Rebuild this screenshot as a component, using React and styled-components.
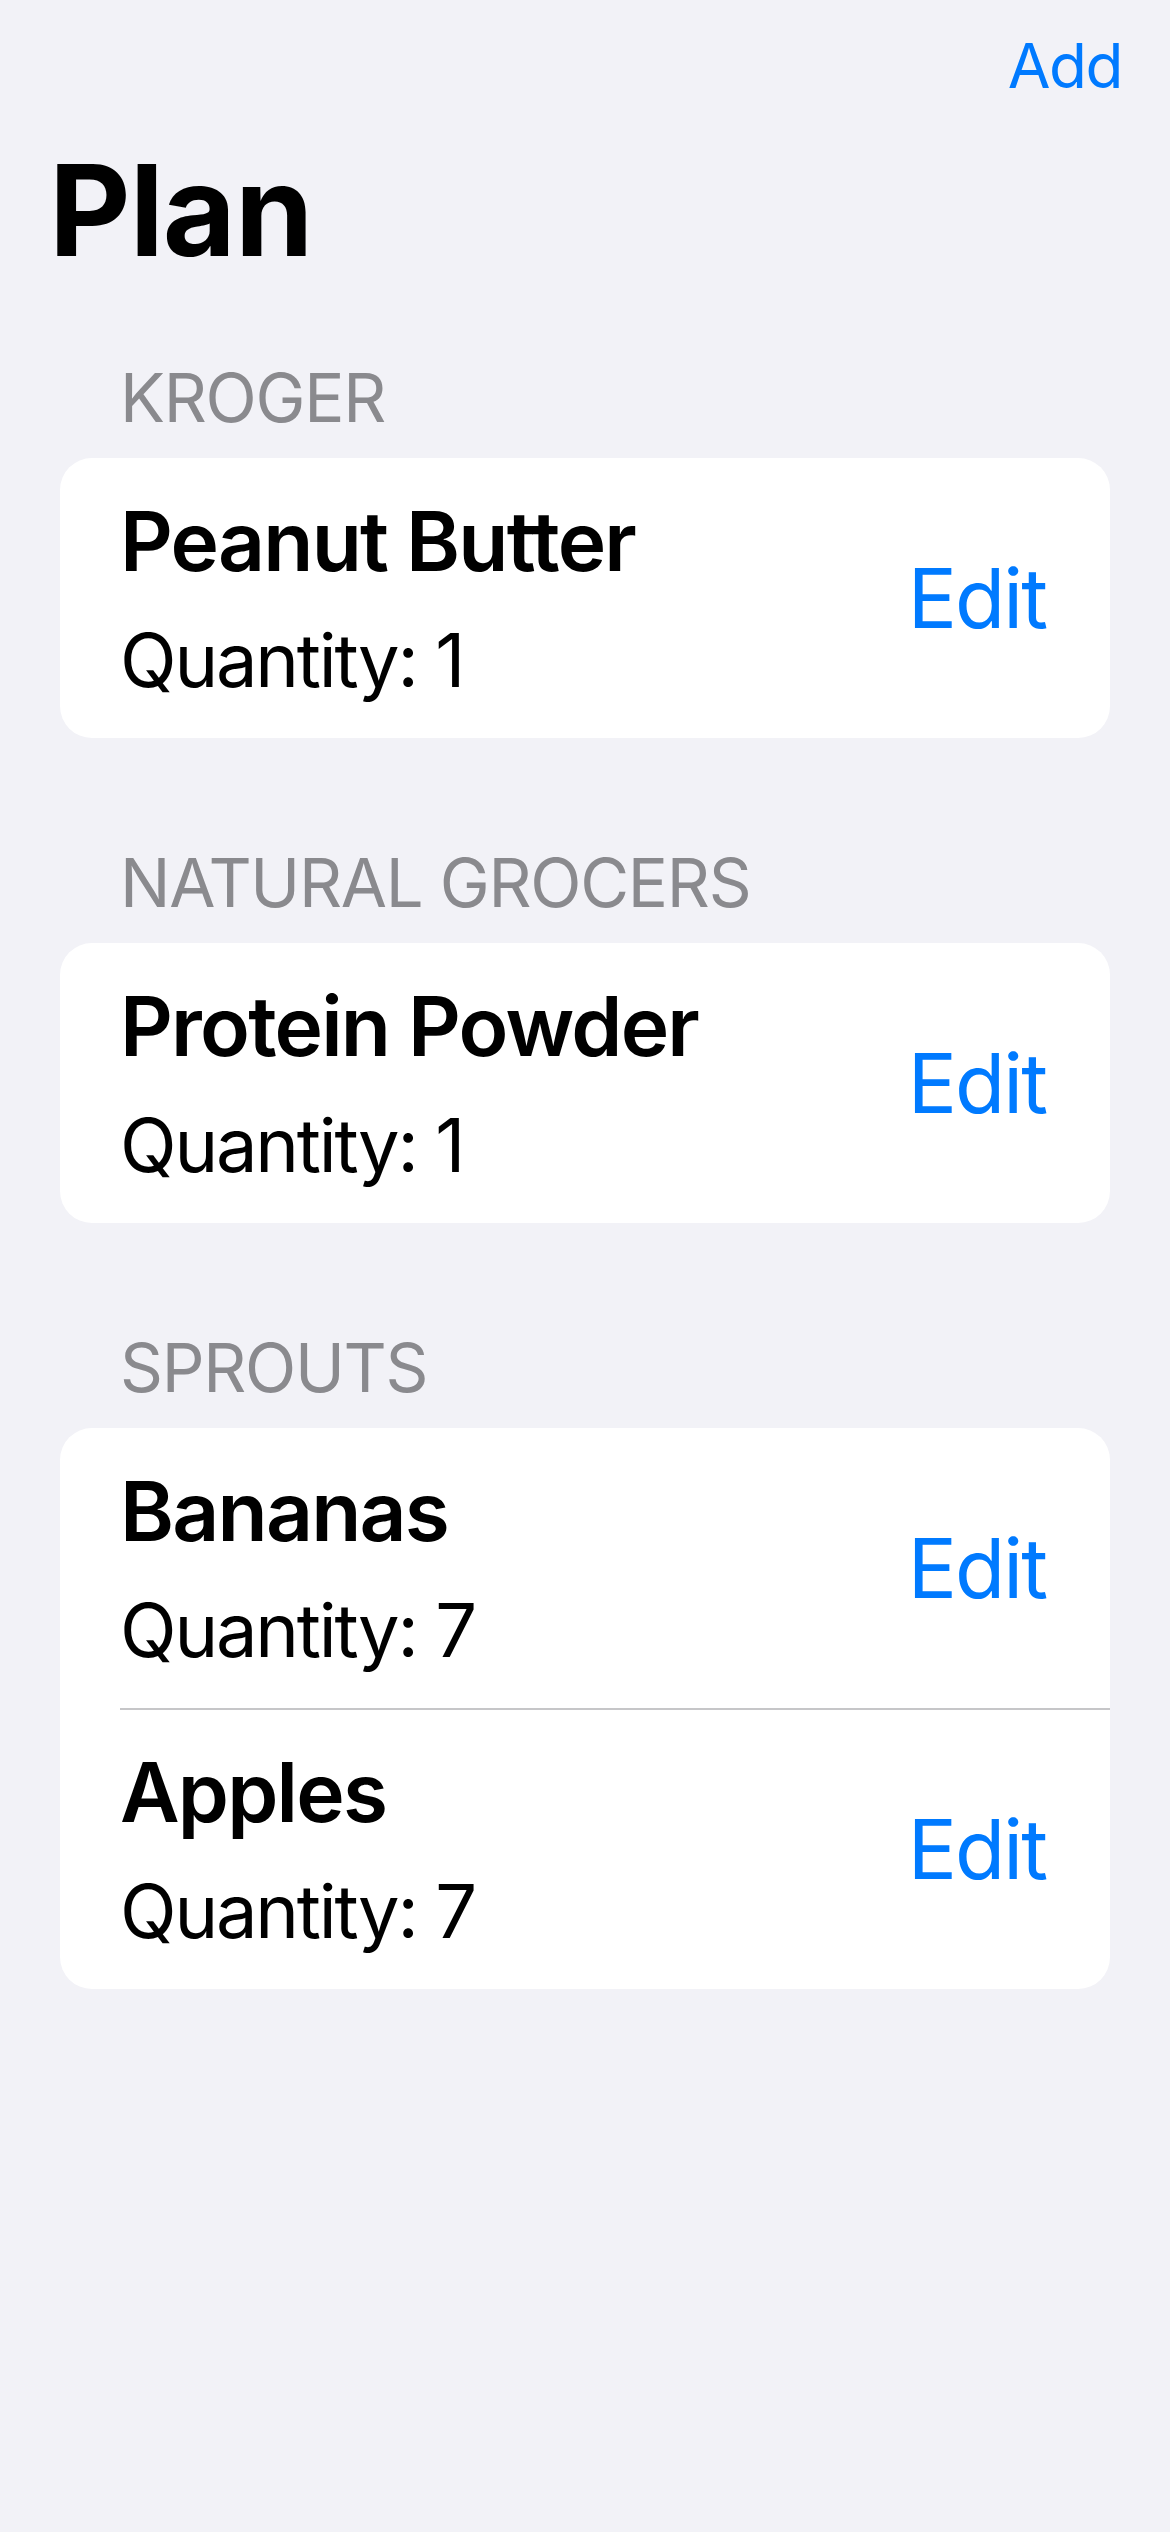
import React from 'react';
import styled, { createGlobalStyle } from 'styled-components';

const GlobalStyle = createGlobalStyle`
  html, body {
    margin: 0;
    padding: 0;
    background: #f2f2f7;
  }
  body {
    font-family: Inter, "Noto Sans", "Liberation Sans", sans-serif;
    -webkit-font-smoothing: antialiased;
  }
`;

const Page = styled.div`
  width: 1170px;
  min-height: 2532px;
  background: #f2f2f7;
  color: #000;
`;

const NavBar = styled.header`
  display: flex;
  justify-content: flex-end;
  padding: 28px 48px 0 0;
`;

const NavButton = styled.button`
  border: 0;
  padding: 0;
  background: none;
  font-family: inherit;
  font-size: 62px;
  line-height: 75px;
  font-weight: 400;
  letter-spacing: -1.5px;
  color: #007aff;
`;

const LargeTitle = styled.h1`
  margin: 31px 0 0 49px;
  font-size: 126px;
  line-height: 152px;
  font-weight: 700;
  letter-spacing: -1px;
`;

const Section = styled.section`
  margin-top: ${(p) => (p.$first ? '71px' : '104px')};
`;

const SectionHeader = styled.h2`
  margin: 0 0 20px 120px;
  font-size: 67px;
  line-height: 81px;
  font-weight: 400;
  letter-spacing: -1.3px;
  color: #8a8a8e;
  text-transform: uppercase;
`;

const Card = styled.div`
  margin: 0 60px;
  background: #fff;
  border-radius: 32px;
  overflow: hidden;
`;

const Row = styled.div`
  display: flex;
  align-items: center;
  justify-content: space-between;
  margin-left: 60px;
  padding: 34px 64px 33px 0;

  & + & {
    border-top: 2px solid #c6c6c8;
    padding-top: 33px;
  }
`;

const ItemInfo = styled.div`
  display: flex;
  flex-direction: column;
  gap: 24px;
`;

const ItemName = styled.div`
  font-size: 82px;
  line-height: 99px;
  font-weight: 600;
  letter-spacing: -1.8px;
`;

const ItemQty = styled.div`
  font-size: 74px;
  line-height: 90px;
  font-weight: 400;
  letter-spacing: -2.2px;
`;

const EditButton = styled.button`
  border: 0;
  padding: 0;
  background: none;
  font-family: inherit;
  font-size: 82px;
  line-height: 99px;
  font-weight: 400;
  letter-spacing: -2px;
  color: #007aff;
`;

const stores = [
  { name: 'Kroger', items: [{ name: 'Peanut Butter', qty: 1 }] },
  { name: 'Natural Grocers', items: [{ name: 'Protein Powder', qty: 1 }] },
  {
    name: 'Sprouts',
    items: [
      { name: 'Bananas', qty: 7 },
      { name: 'Apples', qty: 7 },
    ],
  },
];

export default function App() {
  return (
    <Page>
      <GlobalStyle />
      <NavBar>
        <NavButton>Add</NavButton>
      </NavBar>
      <LargeTitle>Plan</LargeTitle>
      {stores.map((store, i) => (
        <Section key={store.name} $first={i === 0}>
          <SectionHeader>{store.name}</SectionHeader>
          <Card>
            {store.items.map((item) => (
              <Row key={item.name}>
                <ItemInfo>
                  <ItemName>{item.name}</ItemName>
                  <ItemQty>Quantity: {item.qty}</ItemQty>
                </ItemInfo>
                <EditButton>Edit</EditButton>
              </Row>
            ))}
          </Card>
        </Section>
      ))}
    </Page>
  );
}
